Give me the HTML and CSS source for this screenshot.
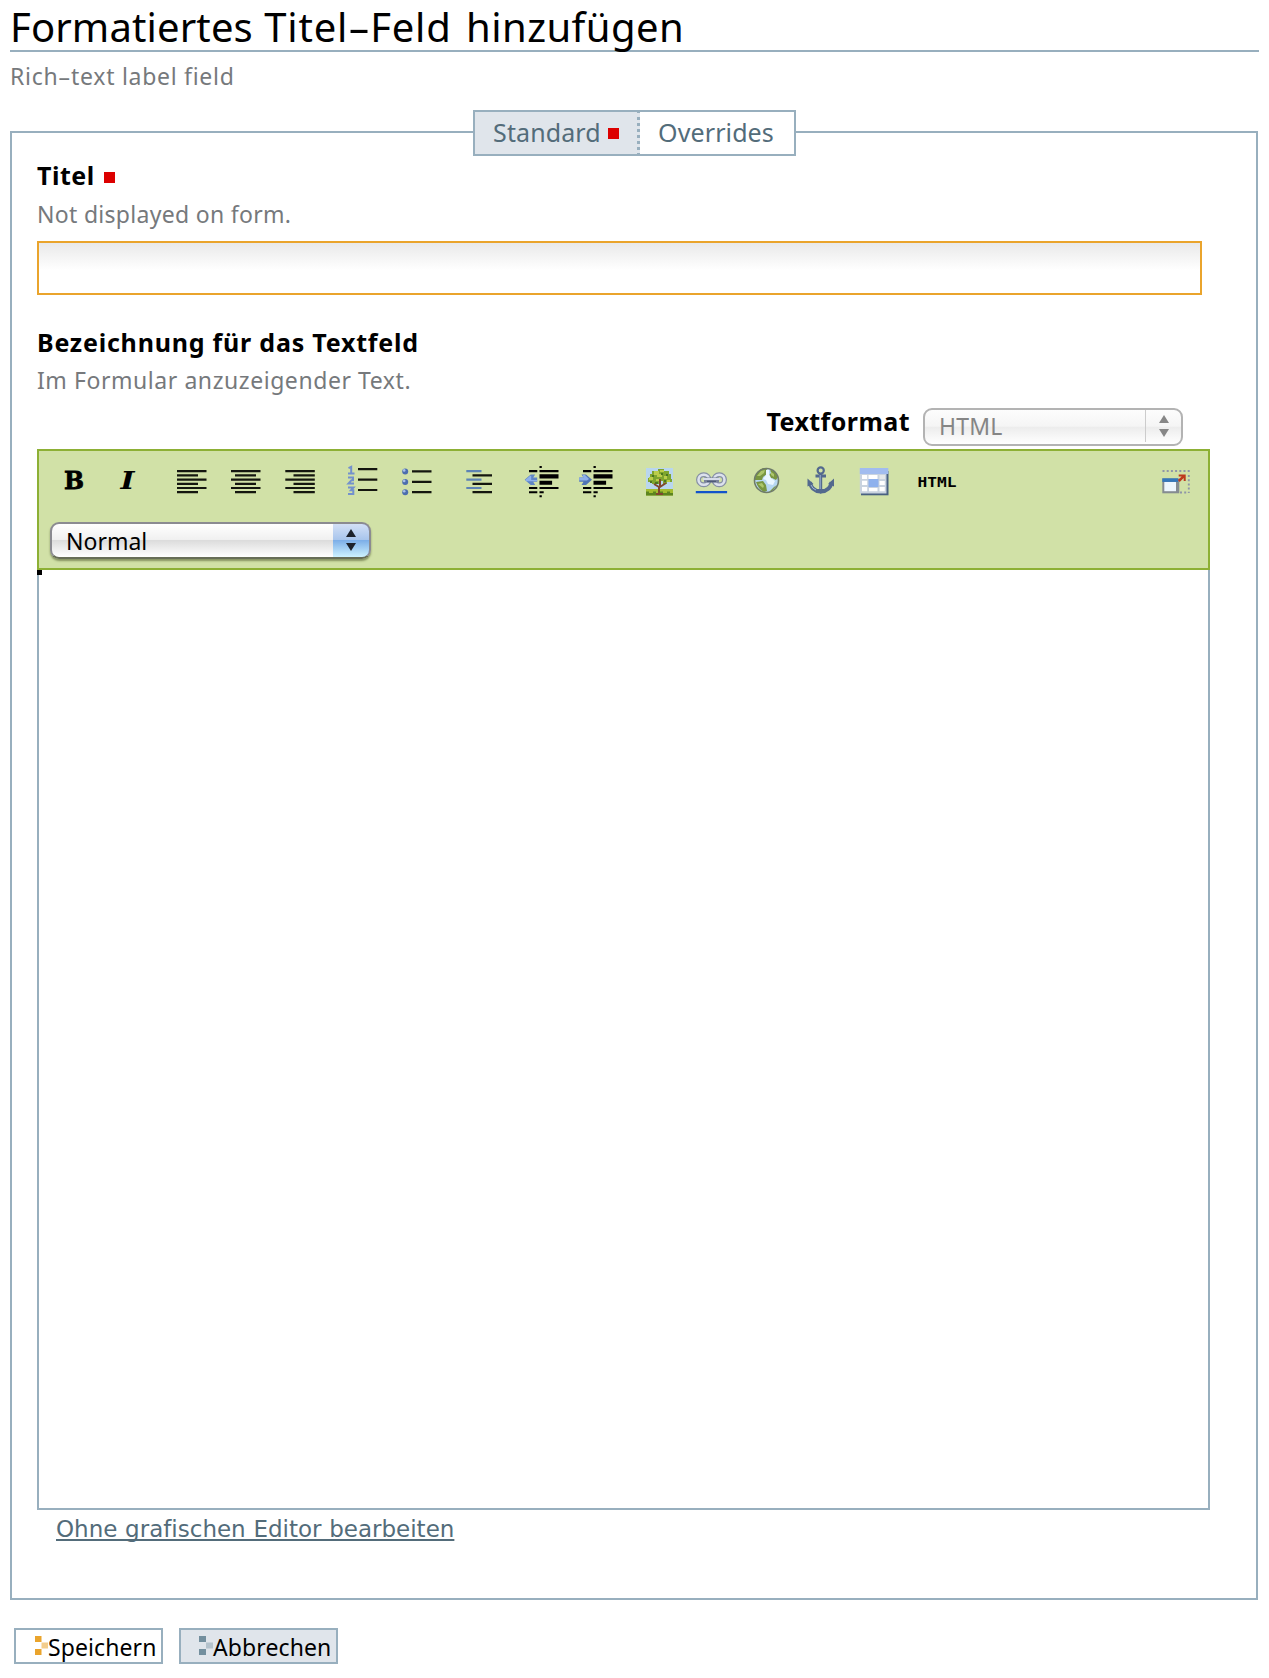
FILE: index.html
```html
<!DOCTYPE html>
<html lang="de">
<head>
<meta charset="utf-8">
<title>Formatiertes Titel-Feld hinzufügen</title>
<link rel="stylesheet" href="styles.css">
</head>
<body>
<h1 class="page-title"><span class="word-tight">Formatiertes</span> <span class="word-wide">Titel<span class="hyphen">-</span>Feld</span> <span class="word-last">hinzufügen</span></h1>
<p class="page-description">Rich<span class="hyphen">-</span>text label field</p>

<nav class="tabs">
  <a class="tab tab-selected">Standard<span class="required"></span></a>
  <a class="tab">Overrides</a>
</nav>

<section class="panel">
  <label class="field-label">Titel<span class="required"></span></label>
  <p class="help help-title">Not displayed on form.</p>
  <input class="text-input" type="text">

  <label class="field-label field-label-second">Bezeichnung für das Textfeld</label>
  <p class="help help-body">Im Formular anzuzeigender Text.</p>

  <div class="format-row">
    <span class="format-label">Textformat</span>
    <div class="select select-disabled">
      <span class="select-value">HTML</span>
      <span class="select-arrows"><svg width="12" height="26" viewBox="0 0 12 26"><path d="M6 2l5 8H1zM6 24l5-8H1z"/></svg></span>
    </div>
  </div>

  <div class="toolbar">
    <div class="tools">
      <svg width="50" height="40" viewBox="49 460 50 40"><text class="glyph glyph-bold" x="64" y="489" textLength="20" lengthAdjust="spacingAndGlyphs">B</text></svg>
      <svg width="59" height="40" viewBox="99 460 59 40"><text class="glyph glyph-italic" x="120.500" y="489" textLength="14" lengthAdjust="spacingAndGlyphs">I</text></svg>
      <svg width="60" height="40" viewBox="158 460 60 40"><path class="ink" d="M177 471.2h29.500M177 475.400h21M177 479.600h29.500M177 483.800h21M177 488h29.500M177 492.200h21"/></svg>
      <svg width="54" height="40" viewBox="218 460 54 40"><path class="ink" d="M231 471.2h29.500M235 475.400h21M231 479.600h29.500M235 483.800h21M231 488h29.500M235 492.200h21"/></svg>
      <svg width="64" height="40" viewBox="272 460 64 40"><path class="ink" d="M285.300 471.2h29.500M293.500 475.400h21.300M285.300 479.600h29.500M293.500 483.800h21.300M285.300 488h29.500M293.500 492.200h21.300"/></svg>
      <svg width="54" height="40" viewBox="336 460 54 40"><path class="ink" d="M358 469.200h19.300M358 479.600h19.300M358 490h19.300"/><path fill="none" stroke="#7391cd" stroke-width="2" d="M348.500 468.200l2.700-1.400v6.500M348 473.600h6.500M348 477.500h5v2.700h-1.500l-3 3.300h5.500M348 487.500h5.500l-2.500 2.700h2.300v3.800H348"/></svg>
      <svg width="60" height="40" viewBox="390 460 60 40"><path class="ink" d="M412 471.300h19.500M412 481.800h19.500M412 492.200h19.500"/><g fill="#4c6eae"><circle cx="405.200" cy="471.500" r="3"/><circle cx="405.200" cy="482" r="3"/><circle cx="405.200" cy="492.300" r="3"/></g><g fill="#a9c0ea"><circle cx="404.200" cy="470.400" r="1.300"/><circle cx="404.200" cy="480.900" r="1.300"/><circle cx="404.200" cy="491.200" r="1.300"/></g></svg>
      <svg width="60" height="40" viewBox="450 460 60 40"><path class="ink" d="M472.500 475.400H492M472.500 483.800H492M472.500 492.200H492"/><path stroke="#5d83b5" stroke-width="2.200" d="M466.300 471.200h15.200M466.300 479.600h15.200M466.300 488h15.200"/></svg>
      <svg width="56" height="40" viewBox="510 460 56 40"><path d="M529 470.100h8.300v2.100H529zM529 487h8.300v2.100H529zM529 491.200h8.300v2.100H529zM539.500 466h2.300v2h-2.300zM539.500 495.300h2.300v2h-2.300zM539.500 470.100h19v2.100h-19zM539.500 474.300h19v4.200h-19zM539.500 480.800h12.600v4h-12.600zM539.500 487h19v2.100h-19zM539.500 491.200h4.200v2.100h-4.200z"/><path fill="#5f85c5" d="M524.700 479.700l6-5.300h4.500l-2 3.200h4v4.200h-4l2 3.200h-4.500z"/><path fill="#8db0ea" d="M525.500 479.700l4.700-4 1 .4v4h6v1.200h-11z"/></svg>
      <svg width="64" height="40" viewBox="566 460 64 40"><path d="M583 470.100h8.300v2.100H583zM583 487h8.300v2.100H583zM583 491.200h8.300v2.100H583zM593.500 466h2.300v2h-2.300zM593.500 495.300h2.300v2h-2.300zM593.500 470.100h19v2.100h-19zM593.500 474.300h19v4.200h-19zM593.500 480.800h12.600v4h-12.600zM593.500 487h19v2.100h-19zM593.500 491.200h4.200v2.100h-4.200z"/><path fill="#5074b5" d="M592 479.700l-6 5.300h-4.500l2-3.200h-4.300v-4.200h4.300l-2-3.200h4.500z"/><path fill="#8db0ea" d="M579.200 477.600h4.300l-1-2.500h2.500l4 4-2 1.300h-7.800z"/></svg>
      <svg width="54" height="40" viewBox="630 460 54 40"><path fill="#b9d6ee" d="M646 468h27v22h-27z"/><path fill="#a3bd2f" d="M646 489h27v6.500h-27z"/><path fill="#5c8420" d="M646 491.500h3v1.500h4v-1.500h3v1.500h4v-1.500h3v1.500h4v-1.500h3v1.500h3v2.500h-27z"/><path fill="#7fa52e" d="M654 471h4v-2h6v2h5v3h2v5h1v3h-5v2h-4v-3h-4v3h-7v-2h-4v-4h2v-4h2v-3z"/><path fill="#bccd4a" d="M654 471h5v3h3v3h-5v-2h-3zM649 477h4v3h-4zM660 470h4v2h-4zM664 476h3v3h-3zM656 479h3v2h-3zM667 480h3v2h-3z"/><path fill="#4c7620" d="M652 475h2v2h-2zM661 473h2v2h-2zM666 474h2v2h-2zM655 482h3v2h-3zM664 480h2v2h-2zM650 481h2v2h-2z"/><path fill="none" stroke="#80472f" stroke-width="2" d="M654 484l5 3v7M666 483l-6 4v-8M656 494h7"/></svg>
      <svg width="56" height="40" viewBox="684 460 56 40"><g fill="none" stroke="#8790a5" stroke-width="5"><rect x="698.500" y="474.700" width="10.500" height="10" rx="5"/><rect x="714" y="474.700" width="10.500" height="10" rx="5"/></g><g fill="none" stroke="#dce1ed" stroke-width="2.600"><rect x="698.500" y="474.700" width="10.500" height="10" rx="5"/><rect x="714" y="474.700" width="10.500" height="10" rx="5"/></g><path stroke="#7b849b" stroke-width="5" d="M704 480h15"/><path stroke="#d7dcea" stroke-width="2" d="M703 479h17"/><path stroke="#4e5a78" stroke-width="1.500" d="M707 481.500h9"/><path fill="#1253cb" d="M695.800 491h31.300v2.300h-31.300z"/></svg>
      <svg width="55" height="40" viewBox="740 460 55 40"><circle cx="766.500" cy="480.500" r="12.300" fill="#b7d7f2"/><path fill="#799641" d="M755 478q1-7 8-10l4 1v5l-4 3-1 3h-7zM770 469q6 2 8 8l-2 3-4-2-3 2-1-4 3-3zM756 482l7-1 3 4 1 6-3 1q-6-3-8-10zM774 487l3-2-5 6-3 1z"/><path fill="#adc66b" d="M757 476l4-5 4-1-1 3-4 3zM771 472l3 2v3l-3-2zM758 484l4-1 2 3-1 2z"/><path fill="#eaf6ff" d="M766 470l3-1v5l2 4 4 3-2 4-5-1-2-4-3-1 3-4z"/><circle cx="766.500" cy="480.500" r="12" fill="none" stroke="#6f7b68" stroke-width="1.600"/></svg>
      <svg width="52" height="40" viewBox="795 460 52 40"><g fill="none" stroke="#53698e" stroke-width="3"><circle cx="820.700" cy="470.500" r="3.100" stroke-width="2.200"/><path d="M820.700 474v18M815.500 476h10.500" /><path stroke-width="3.800" d="M810 482q1 9 10.700 9.500Q830.500 491 831.500 482"/></g><path fill="#53698e" d="M807.500 478.500v8l6-2.500zM834 478.500v8l-6-2.500zM817 489h7.500l-3.700 5z"/><path stroke="#9fb3d5" d="M820.200 475v14M811 485q1.500 4 5 5" fill="none"/></svg>
      <svg width="58" height="40" viewBox="847 460 58 40"><path fill="#496181" d="M861 471h27.500v24.300H861z"/><path fill="#c9d3df" d="M859.800 468.300h26.700v25.200h-26.700z"/><path fill="#a1bcef" d="M859.800 468h28.500v6h-28.500z"/><path fill="#fff" d="M862 475h5.200v4H862zM868.500 475h9v4h-9zM862 480.800h5.200v4.200H862zM862 487h5.200v4.200H862zM869 488h8.500v3.200H869zM879.500 487h5.300v4.200h-5.300zM879.500 481h5.300v4h-5.300z"/><path fill="#e5e8e9" d="M879.500 475h5.500v4h-5.500z"/><path fill="#8eb1ed" d="M868.500 479h10v8h-10z"/></svg>
      <svg width="75" height="40" viewBox="905 460 75 40"><text class="html-label" x="917.500" y="486.500" textLength="39" lengthAdjust="spacingAndGlyphs">HTML</text></svg>
      <svg class="tool-fullscreen" width="50" height="40" viewBox="1150 460 50 40"><path fill="none" stroke="#8f96a7" stroke-width="1.900" stroke-dasharray="2 2.200" d="M1162.500 471h27.500M1188.800 475v18M1180 492.500h8"/><path fill="#858c91" d="M1162.300 478.500h17v14.800h-17z"/><path fill="#edf6fd" d="M1164.300 482h11.700v9.200h-11.700z"/><path fill="#3478ba" d="M1162.300 478.300h15.700v3.600h-15.700z"/><path fill="#bd3a1d" d="M1178.700 474.500h7v6.500h-2v-3l-4 4-1.800-2 3.800-3.500h-3z"/></svg>
    </div>
    <div class="select select-style">
      <span class="select-value">Normal</span>
      <span class="select-arrows"><svg width="12" height="26" viewBox="0 0 12 26"><path d="M6 2l5 8H1zM6 24l5-8H1z"/></svg></span>
    </div>
  </div>
  <div class="editor"><span class="caret-mark"></span></div>
  <a class="plain-link">Ohne grafischen Editor bearbeiten</a>
</section>

<div class="actions">
  <button class="button button-save"><svg width="13" height="19" viewBox="0 0 13 19"><path d="M0 0h6.500v6H0zM0 13h6.500v6H0z"/><path opacity=".55" d="M6.500 6.500H13v6H6.500z"/></svg>Speichern</button>
  <button class="button button-cancel"><svg width="14" height="19" viewBox="0 0 14 19"><path d="M0 0h7v6H0zM0 13h7v6H0z"/><path opacity=".4" d="M7 6.500h7v6H7z"/></svg>Abbrechen</button>
</div>
</body>
</html>
```

FILE: styles.css
```css
* { box-sizing: border-box; }

body {
  margin: 0;
  padding: 0 10px;
  background: #fff;
  color: #000;
  font: 23px "Noto Sans", "Open Sans", sans-serif;
}

p { margin: 0; }

.page-title {
  height: 52px;
  margin: 0;
  border-bottom: 2px solid #98afbe;
  font-size: 40px;
  font-weight: 400;
  line-height: 53px;
  word-spacing: 1px;
  white-space: nowrap;
}

.word-tight { letter-spacing: 0.13px; }
.word-wide { letter-spacing: 0.8px; }
.word-last { margin-left: 3px; letter-spacing: 0.45px; }

.hyphen {
  display: inline-block;
  width: 0.55em;
  letter-spacing: 0;
  text-align: center;
  transform: scaleX(1.75);
}

.page-description {
  height: 48px;
  color: #76797c;
  line-height: 48px;
  letter-spacing: 0.72px;
}

.tabs {
  position: relative;
  z-index: 1;
  display: flex;
  justify-content: center;
  margin-top: 10px;
}

.tab {
  display: flex;
  align-items: center;
  height: 46px;
  padding: 0 20px 2px 18px;
  border: 2px solid #98afbe;
  border-left: 0;
  background: #fff;
  color: #536c7a;
  font-size: 25px;
  letter-spacing: 0.1px;
}

.tab-selected {
  width: 167px;
  padding: 0 0 2px 18px;
  border-left: 2px solid #98afbe;
  border-right: 3px dotted #98afbe;
  background: #e0e5eb;
}

.required {
  display: inline-block;
  width: 11px;
  height: 11px;
  margin-left: 8px;
  background: #dc0000;
}

.tab .required { margin: 2px 0 0 7px; }
.field-label .required { margin-left: 9px; vertical-align: 2px; }

.panel {
  width: 1248px;
  height: 1469px;
  margin-top: -25px;
  padding: 26px 25px 0;
  border: 2px solid #98afbe;
}

.field-label {
  display: block;
  height: 32px;
  font-size: 25px;
  font-weight: 700;
  line-height: 32px;
  letter-spacing: 0.5px;
}

.field-label-second {
  margin-top: 31px;
  letter-spacing: 0.78px;
}

.help {
  height: 32px;
  color: #76797c;
  line-height: 32px;
}

.help-title { margin: 7px 0 11px; letter-spacing: 0.3px; }
.help-body { margin-top: 6px; letter-spacing: 0.56px; }

.text-input {
  display: block;
  width: 1165px;
  height: 54px;
  border: 2px solid #eaa42c;
  border-radius: 0;
  outline: 0;
  background: linear-gradient(#e9e9e9, #fff 27px);
}

.format-row {
  display: flex;
  justify-content: flex-end;
  width: 1146px;
  height: 53px;
}

.format-label {
  margin: 9px 13px 0 0;
  font-size: 25px;
  font-weight: 700;
  line-height: 32px;
  letter-spacing: 0.45px;
}

.select {
  display: flex;
  justify-content: space-between;
  overflow: hidden;
  border-radius: 9px;
}

.select-value {
  padding-left: 14px;
  line-height: 35px;
}

.select-arrows {
  display: flex;
  align-items: center;
  justify-content: center;
  width: 36px;
}

.select-disabled {
  width: 260px;
  height: 38px;
  margin-top: 12px;
  border: 2px solid #b3b3b3;
  background: linear-gradient(#fdfdfd, #f5f5f5 48%, #ececec 50%, #fff);
  color: #858585;
}

.select-disabled .select-value { line-height: 33px; letter-spacing: 0.2px; }
.select-disabled .select-arrows { height: 32px; border-left: 1px solid #ccc; fill: #868686; }

.toolbar {
  width: 1173px;
  height: 121px;
  padding: 9px 8px 0 10px;
  border: 2px solid #8db035;
  background: #d1e1a7;
}

.tools {
  display: flex;
  height: 40px;
}

.tools svg { flex: none; }
.tool-fullscreen { margin-left: auto; }

.ink {
  stroke: #14160f;
  stroke-width: 2.2px;
}

.glyph { font: 700 25px "DejaVu Serif", serif; }
.glyph-bold { stroke: #000; stroke-width: 0.8px; }
.glyph-italic { font-style: italic; }
.html-label { font: 700 14px "DejaVu Sans Mono", monospace; }

.select-style {
  width: 321px;
  height: 37px;
  margin: 22px 0 0 1px;
  border: 2px solid #8b8b91;
  border-bottom-color: #676d57;
  background: linear-gradient(#fff, #f0f0f0 48%, #dcdcdc 50%, #fff);
  box-shadow: 0 2px 2px rgba(60, 70, 30, 0.5);
}

.select-style .select-arrows {
  width: 38px;
  margin: -2px -2px -2px 0;
  border: 2px solid #3c50a0;
  border-left: 0;
  border-bottom-color: #52718c;
  border-radius: 0 9px 9px 0;
  background: linear-gradient(#d3e0f6, #a8c5ec 48%, #7dafe8 50%, #cdf2ff);
  fill: #1d222b;
}

.select-style .select-arrows svg { margin-top: -2px; }

.editor {
  width: 1173px;
  height: 940px;
  border: 2px solid #98afbe;
  border-top: 0;
}

.caret-mark {
  display: block;
  width: 5px;
  height: 5px;
  margin-left: -2px;
  background: #000;
}

.plain-link {
  display: inline-block;
  margin-left: 19px;
  color: #536c7a;
  font-family: "DejaVu Sans", sans-serif;
  font-variant-ligatures: none;
  line-height: 38px;
  word-spacing: 0.4px;
  text-decoration: underline;
  text-decoration-thickness: 2px;
  text-decoration-skip-ink: none;
  text-underline-offset: 2px;
}

.actions {
  display: flex;
  gap: 16px;
  margin: 28px 0 0 4px;
}

.button {
  display: flex;
  align-items: center;
  height: 36px;
  padding: 2px 0 0 19px;
  border: 2px solid #98afbe;
  background: #fff;
  color: #000;
  font: inherit;
  line-height: 32px;
  letter-spacing: 0.1px;
}

.button svg { flex: none; margin-top: -4px; }
.button-save { width: 149px; fill: #eaa42c; }
.button-cancel { width: 159px; padding-left: 18px; background: #e0e5eb; fill: #738f9e; }
```
